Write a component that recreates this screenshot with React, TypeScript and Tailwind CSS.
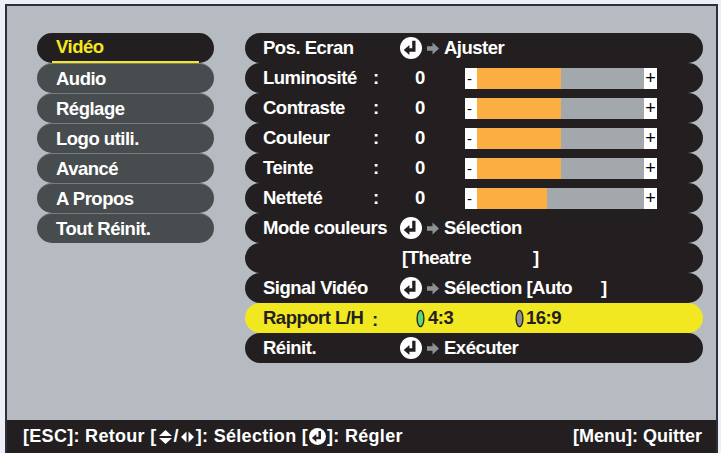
import React from "react";

const DARK = "#231f20";

function EnterIcon({ size = 22 }: { size?: number }) {
  return (
    <svg width={size} height={size} viewBox="0 0 20 20" className="shrink-0">
      <circle cx="10" cy="10" r="10" fill="white" />
      <path d="M12.6 3.4 V11.8 H8" stroke={DARK} strokeWidth="3" fill="none" />
      <path d="M3.4 11.8 L8.6 7.2 V16.4 Z" fill={DARK} />
    </svg>
  );
}

function GrayArrow() {
  return (
    <svg width="12" height="13" viewBox="0 0 12 13" className="shrink-0">
      <path d="M0 4.3 H5.5 V0.5 L12 6.5 L5.5 12.5 V8.7 H0 Z" fill="#8c9196" />
    </svg>
  );
}

function Row({ children, yellow = false }: { children: React.ReactNode; yellow?: boolean }) {
  return (
    <div
      className={
        yellow
          ? "h-[30px] rounded-full bg-[#f2e822] text-[#231f20] flex items-center pl-[18px]"
          : "h-[30px] rounded-full bg-[#231f20] text-white flex items-center pl-[18px]"
      }
    >
      {children}
    </div>
  );
}

function Slider({ fill }: { fill: number }) {
  return (
    <div className="flex h-[21px] w-[192px] tracking-normal">
      <div className="w-[12px] bg-white text-black text-[15px] font-normal leading-[21px] pl-[2px]">-</div>
      <div className="bg-[#fbae42]" style={{ width: fill }} />
      <div className="flex-1 bg-[#a3a8ad]" />
      <div className="w-[13px] bg-white text-black text-[18px] font-normal leading-[20px] text-center">+</div>
    </div>
  );
}

function SliderRow({ label, fill }: { label: string; fill: number }) {
  return (
    <Row>
      <span className="w-[110px] shrink-0">{label}</span>
      <span className="w-[42px] shrink-0">:</span>
      <span className="w-[50px] shrink-0">0</span>
      <Slider fill={fill} />
    </Row>
  );
}

function ActionRow({ label, action }: { label: string; action: React.ReactNode }) {
  return (
    <Row>
      <span className="w-[137px] shrink-0">{label}</span>
      <EnterIcon />
      <span className="ml-[5px] mr-[5px] flex items-center">
        <GrayArrow />
      </span>
      {action}
    </Row>
  );
}

function Oval({ color }: { color: string }) {
  return (
    <svg width="9" height="19" viewBox="0 0 9 19" className="shrink-0">
      <ellipse cx="4.5" cy="9.5" rx="3.4" ry="8.2" fill={color} stroke="#231f20" strokeWidth="1.3" />
    </svg>
  );
}

function UpDown() {
  return (
    <svg width="15" height="16" viewBox="0 0 15 16" className="inline-block mx-[1px]">
      <path d="M1 7 L7.5 1 L14 7 Z" fill="white" />
      <path d="M1 9 L7.5 15 L14 9 Z" fill="white" />
    </svg>
  );
}

function LeftRight() {
  return (
    <svg width="15" height="16" viewBox="0 0 15 16" className="inline-block mx-[1px]">
      <path d="M6.5 2.5 L1 8 L6.5 13.5 Z" fill="white" />
      <path d="M8.5 2.5 L14 8 L8.5 13.5 Z" fill="white" />
    </svg>
  );
}

const menu = ["Vidéo", "Audio", "Réglage", "Logo utili.", "Avancé", "A Propos", "Tout Réinit."];

export default function App() {
  return (
    <div className="w-[721px] h-[453px] overflow-hidden bg-[#eceef8] pt-[4px] pl-[5px] pr-[3px] font-['Liberation_Sans',Arial,sans-serif] font-bold text-[18.5px] tracking-[-0.5px]">
      <div className="h-[449px] border-t-2 border-l-2 border-r-2 border-[#2d2f3a] bg-[#b5bbc1] flex flex-col">
        <div className="flex-1 flex pt-[27px] pl-[30px] gap-[31px]">
          <div className="w-[177px] flex flex-col">
            {menu.map((m, i) =>
              i === 0 ? (
                <div key={m} className="h-[30px] rounded-full bg-[#231f20] text-[#f4e81e] flex">
                  <div className="mx-[15px] flex-1 pl-[4px] flex items-center border-b-2 border-[#f4e81e]">{m}</div>
                </div>
              ) : (
                <div
                  key={m}
                  className="h-[30px] rounded-full bg-[#474c4e] text-white flex items-center pl-[19px] border-t border-[#767b7f]"
                >
                  {m}
                </div>
              )
            )}
          </div>
          <div className="w-[458px] flex flex-col">
            <ActionRow label="Pos. Ecran" action={<span>Ajuster</span>} />
            <SliderRow label="Luminosité" fill={84} />
            <SliderRow label="Contraste" fill={84} />
            <SliderRow label="Couleur" fill={84} />
            <SliderRow label="Teinte" fill={84} />
            <SliderRow label="Netteté" fill={70} />
            <ActionRow label="Mode couleurs" action={<span>Sélection</span>} />
            <Row>
              <span className="w-[139px] shrink-0" />
              <span className="w-[131px] shrink-0">[Theatre</span>
              <span>]</span>
            </Row>
            <ActionRow
              label="Signal Vidéo"
              action={
                <span className="flex">
                  <span className="w-[157px]">Sélection [Auto</span>
                  <span>]</span>
                </span>
              }
            />
            <Row yellow>
              <span className="w-[109px] shrink-0">Rapport L/H</span>
              <span className="w-[44px] shrink-0 pt-[3px]">:</span>
              <span className="w-[99px] shrink-0 flex items-center gap-[3px]">
                <Oval color="#5fd56b" />
                <span>4:3</span>
              </span>
              <span className="flex items-center gap-[2px]">
                <Oval color="#8a9197" />
                <span>16:9</span>
              </span>
            </Row>
            <ActionRow label="Réinit." action={<span>Exécuter</span>} />
          </div>
        </div>
        <div className="h-[33px] bg-[#231f20] text-white text-[18px] tracking-normal flex items-center justify-between pl-[16px] pr-[14px]">
          <div className="flex items-center tracking-[0.3px]">
            <span>[ESC]: Retour [</span>
            <UpDown />
            <span>/</span>
            <LeftRight />
            <span>]: Sélection [</span>
            <span className="mx-[1px] flex items-center">
              <EnterIcon size={17} />
            </span>
            <span>]: Régler</span>
          </div>
          <span>[Menu]: Quitter</span>
        </div>
      </div>
    </div>
  );
}
